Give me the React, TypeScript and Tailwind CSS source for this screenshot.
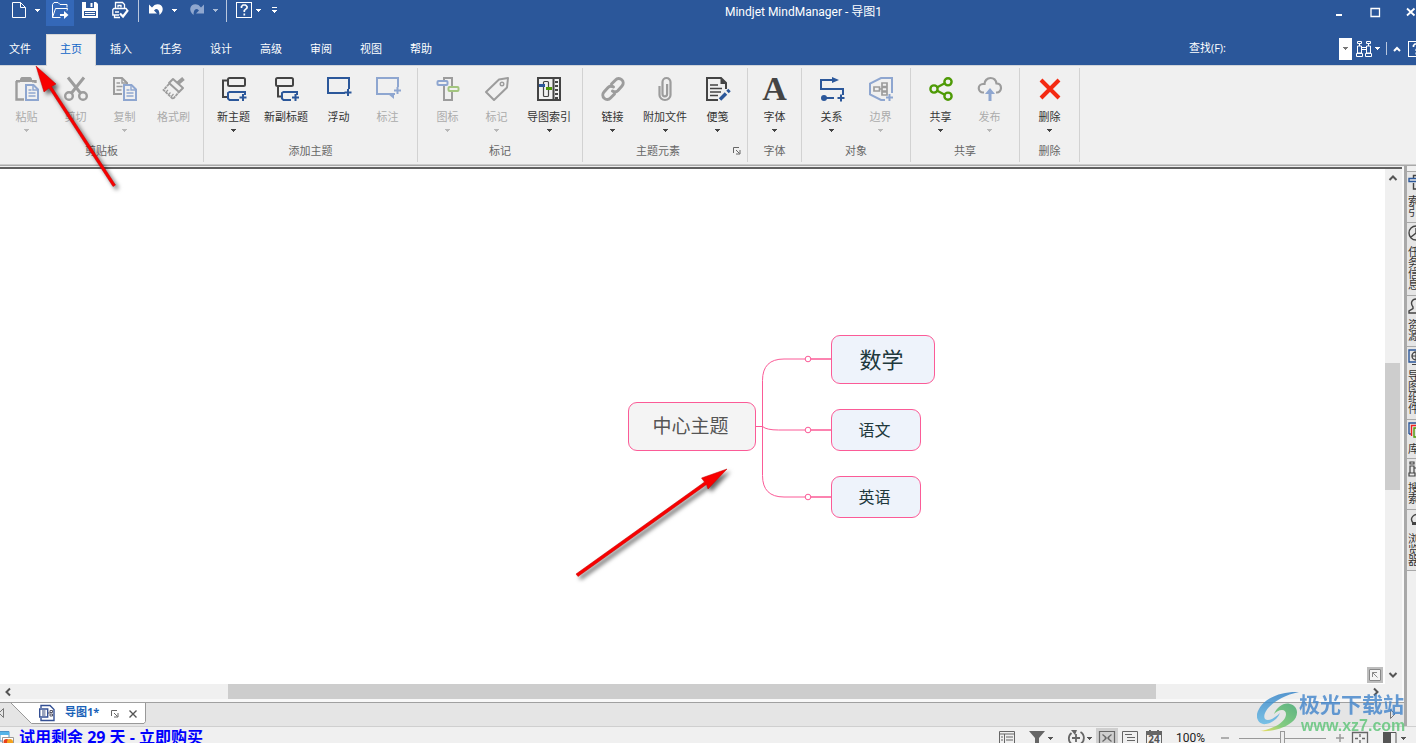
import React from "react";

type IconProps = { children: React.ReactNode; size?: string; box?: string };

function Icon({ children, size = "h-6 w-6", box = "0 0 24 24" }: IconProps) {
  return (
    <svg viewBox={box} className={`${size} shrink-0 overflow-visible`} fill="none" aria-hidden="true">
      {children}
    </svg>
  );
}

function Caret({ className = "text-[#444]" }: { className?: string }) {
  return (
    <svg viewBox="0 0 5 3" className={`h-[3px] w-[5px] shrink-0 ${className}`} aria-hidden="true">
      <path d="M0 0h5v1H4v1H3v1H2V2H1V1H0z" fill="currentColor" />
    </svg>
  );
}

const GRAY = "#9c9c9c";
const SOFT = "#8ea6d0";
const DARK = "#444444";
const BLUE = "#2b579a";

const icons: Record<string, React.ReactNode> = {
  paste: (
    <Icon>
      <path d="M1.5 4v18.5H9M1 4.2h4M17 4.2h3.5V6" stroke={GRAY} strokeWidth="2.4" />
      <path d="M5 1.5 6.5 0h9L17 1.500V5H5z" fill={GRAY} />
      <path d="M11 8h7.500l4.500 4.500V23H11z" stroke={SOFT} strokeWidth="2" />
      <path d="M18 8v5h5" stroke={SOFT} strokeWidth="1.500" />
      <path d="M13.500 13h3M13.500 16h7M13.500 19h7" stroke={SOFT} strokeWidth="1.400" />
    </Icon>
  ),
  cut: (
    <Icon>
      <path d="M4 0.500 16.500 16M20 0.500 7.500 16" stroke={GRAY} strokeWidth="3" />
      <circle cx="5" cy="19" r="3.800" stroke={GRAY} strokeWidth="2.400" />
      <circle cx="19" cy="19" r="3.800" stroke={GRAY} strokeWidth="2.400" />
    </Icon>
  ),
  copy: (
    <Icon>
      <path d="M9 17H1V1h8l5 5v1" stroke={GRAY} strokeWidth="2" />
      <path d="M9 1v5h5M3.500 6H7M3.500 9.500h6M3.500 13h5" stroke={GRAY} strokeWidth="1.400" />
      <path d="M11 8h7.500l4.500 4.500V23H11z" stroke={SOFT} strokeWidth="2" />
      <path d="M18 8v5h5M13.500 13h3M13.500 16h7M13.500 19h7" stroke={SOFT} strokeWidth="1.400" />
    </Icon>
  ),
  painter: (
    <Icon>
      <path d="m7 6 4-4 10 9-4 4z" stroke={GRAY} strokeWidth="2" strokeLinejoin="round" />
      <path d="m15.500 6.500 6-5" stroke={GRAY} strokeWidth="4" />
      <path d="M7 7 1.500 13 11 22l6-7" stroke={GRAY} strokeWidth="1.800" strokeDasharray="3 0.600" />
      <path d="m4 15 2-2M6.500 17.500l2-2M9 20l2.500-3" stroke={GRAY} strokeWidth="1.200" />
    </Icon>
  ),
  topic: (
    <Icon>
      <path d="M6 3.500H1V20h4" stroke={DARK} strokeWidth="2" />
      <rect x="6" y="1" width="17" height="8" rx="1.500" stroke={DARK} strokeWidth="2" />
      <path d="M23 18v-3H7.500L6 16v5.500L7.500 23H17M21 17v7M17.500 20.500h7" stroke={BLUE} strokeWidth="2" />
    </Icon>
  ),
  subtopic: (
    <Icon>
      <path d="M4 9v10.500h4" stroke={DARK} strokeWidth="2" />
      <rect x="2" y="1" width="17" height="8" rx="1.500" stroke={DARK} strokeWidth="2" />
      <path d="M23 18v-3H9.500L8 16v5.500L9.500 23H17M21.500 17v7M18 20.500h7" stroke={BLUE} strokeWidth="2" />
    </Icon>
  ),
  floating: (
    <Icon>
      <path d="M18 16H1V1h21v11M21 12v7M17.500 15.500h7" stroke={BLUE} strokeWidth="2" />
    </Icon>
  ),
  callout: (
    <Icon>
      <path d="M19 17H1V1h21v9M21.500 10v7M18 13.500h7" stroke={SOFT} strokeWidth="2" />
      <path d="M12 17h6v5z" fill={SOFT} />
    </Icon>
  ),
  markers: (
    <Icon>
      <path d="M8 4V1h8v8M8 8v15h8v-8" stroke={GRAY} strokeWidth="2" />
      <rect x="1.500" y="4" width="10" height="4" rx="1" stroke={SOFT} strokeWidth="2" />
      <rect x="12.500" y="10" width="10" height="4" rx="1" stroke="#a3c57f" strokeWidth="2" />
    </Icon>
  ),
  tag: (
    <Icon>
      <path d="M1 15 14 2.500 23 1l-1 9.500L9 23z" stroke={GRAY} strokeWidth="2" strokeLinejoin="round" />
      <circle cx="17" cy="7" r="1.800" stroke={GRAY} strokeWidth="1.400" />
    </Icon>
  ),
  index: (
    <Icon>
      <path d="M1 1h22v22H1zM16.500 1v22" stroke={DARK} strokeWidth="2" />
      <path d="M19.500 4v18" stroke={DARK} strokeWidth="3" strokeDasharray="2 2" />
      <rect x="6.500" y="4.500" width="5" height="15" rx="1" stroke={DARK} strokeWidth="1.200" />
      <path d="M2 8.500h6" stroke={BLUE} strokeWidth="3" />
      <path d="M9 11.500h6" stroke="#4e9a06" strokeWidth="3" />
    </Icon>
  ),
  link: (
    <Icon>
      <g stroke={GRAY} strokeWidth="3" strokeLinecap="round">
        <path d="m10.500 7 4-4a4.400 4.400 0 0 1 6.500 6l-4 4.500a4.400 4.400 0 0 1-5.500.500" />
        <path d="m13.500 17-4 4a4.400 4.400 0 0 1-6.500-6l4-4.500a4.400 4.400 0 0 1 5.500-.500" />
      </g>
    </Icon>
  ),
  clip: (
    <Icon>
      <path
        d="M6.500 9v9a5.500 5 0 0 0 11 0V5a4 4 0 0 0-8 0v12a2.300 2.300 0 0 0 4.600 0V7"
        stroke={GRAY}
        strokeWidth="2.200"
      />
    </Icon>
  ),
  note: (
    <Icon>
      <path d="M12 23H1V1h14l5 5v6" stroke={DARK} strokeWidth="2" />
      <path d="M14.500 1v6H20z" fill={DARK} />
      <path d="M4 8h8M4 11.500h12M4 15h11M4 18.500h8" stroke={DARK} strokeWidth="1.400" />
      <path d="m14 22.500 6-6M21.500 15l2-2" stroke={BLUE} strokeWidth="3.500" />
    </Icon>
  ),
  font: (
    <span className="flex h-6 w-6 items-center justify-center font-['Liberation_Serif',serif] text-[34px] leading-6 font-bold text-[#444]">
      A
    </span>
  ),
  relation: (
    <Icon>
      <path d="M13 3H1v9h22v6M6 21h8M21 17.500v7M17.500 21h7" stroke={BLUE} strokeWidth="2" />
      <path d="m12 0 7 3-7 3z" fill={BLUE} />
      <circle cx="4" cy="21" r="3" fill={BLUE} />
    </Icon>
  ),
  boundary: (
    <Icon>
      <path d="M23 16V1H12L1 6.500v11L12 23h4M20.500 17v7M17 20.500h7" stroke={SOFT} strokeWidth="2" />
      <path d="M5 10h5.500v4H5zM13 6h5v3.500h-5zM13 10.500h5V14h-5zM13 15h5v3h-5zM10.500 12H13" stroke={GRAY} strokeWidth="1.700" />
    </Icon>
  ),
  share: (
    <Icon>
      <path d="m5 12 14-7.500M5 12l14 7.500" stroke="#4e9a06" strokeWidth="2.200" />
      <circle cx="5" cy="12" r="3.600" fill="#f0f0f0" stroke="#4e9a06" strokeWidth="2.400" />
      <circle cx="19" cy="4.800" r="3.600" fill="#f0f0f0" stroke="#4e9a06" strokeWidth="2.400" />
      <circle cx="19" cy="19.200" r="3.600" fill="#f0f0f0" stroke="#4e9a06" strokeWidth="2.400" />
    </Icon>
  ),
  publish: (
    <Icon>
      <path
        d="M6 15.500H5A4.200 4.200 0 0 1 5 7h1.500C6.500 4 9 1 12.500 1S18 3.500 18.500 6.500C21.500 6.500 23 8.500 23 11s-2 4.500-4 4.500h-1"
        stroke={GRAY}
        strokeWidth="2.200"
      />
      <path d="M10.500 24v-7H7l5-6 5 6h-3.500v7z" fill={SOFT} />
    </Icon>
  ),
  remove: (
    <Icon>
      <path d="m3 3 18 18M21 3 3 21" stroke="#f42a12" strokeWidth="4" />
    </Icon>
  ),
};

type Tool = { icon: string; label: string; off?: boolean; menu?: boolean; wide?: boolean };
type Group = { title: string; tools: Tool[]; pad?: string; launcher?: boolean };

const groups: Group[] = [
  {
    title: "剪贴板",
    pad: "pl-0.5 pr-[5px]",
    tools: [
      { icon: "paste", label: "粘贴", off: true, menu: true },
      { icon: "cut", label: "剪切", off: true },
      { icon: "copy", label: "复制", off: true, menu: true },
      { icon: "painter", label: "格式刷", off: true },
    ],
  },
  {
    title: "添加主题",
    tools: [
      { icon: "topic", label: "新主题", menu: true },
      { icon: "subtopic", label: "新副标题", wide: true },
      { icon: "floating", label: "浮动" },
      { icon: "callout", label: "标注", off: true },
    ],
  },
  {
    title: "标记",
    tools: [
      { icon: "markers", label: "图标", off: true, menu: true },
      { icon: "tag", label: "标记", off: true, menu: true },
      { icon: "index", label: "导图索引", menu: true, wide: true },
    ],
  },
  {
    title: "主题元素",
    launcher: true,
    tools: [
      { icon: "link", label: "链接", menu: true },
      { icon: "clip", label: "附加文件", menu: true, wide: true },
      { icon: "note", label: "便笺", menu: true },
    ],
  },
  { title: "字体", pad: "px-0.5", tools: [{ icon: "font", label: "字体", menu: true }] },
  {
    title: "对象",
    tools: [
      { icon: "relation", label: "关系", menu: true },
      { icon: "boundary", label: "边界", off: true, menu: true },
    ],
  },
  {
    title: "共享",
    tools: [
      { icon: "share", label: "共享", menu: true },
      { icon: "publish", label: "发布", off: true, menu: true },
    ],
  },
  { title: "删除", tools: [{ icon: "remove", label: "删除", menu: true }] },
];

function LauncherIcon() {
  return (
    <Icon size="h-2 w-2" box="0 0 8 8">
      <path d="M.500 6V.500H6M3 3l3.500 3.500M7 3v4H3" stroke="#666" />
    </Icon>
  );
}

function RibbonGroup({ title, tools, pad = "px-[5px]", launcher }: Group) {
  return (
    <section className="my-0.5 flex shrink-0 flex-col border-r border-[#d2d2d2]">
      <div className={`flex h-[75px] ${pad}`}>
        {tools.map((t) => (
          <button
            key={t.label}
            disabled={t.off}
            className={`flex flex-col items-center pt-[9px] text-[11px] leading-4 whitespace-nowrap ${t.wide ? "w-14" : "w-[49px]"} ${t.off ? "text-[#ababab]" : "text-[#333]"}`}
          >
            {icons[t.icon]}
            <span className="mt-2 mb-1">{t.label}</span>
            {t.menu && <Caret className={t.off ? "text-[#b8b8b8]" : "text-[#444]"} />}
          </button>
        ))}
      </div>
      <div className="flex items-start justify-center text-[11px] leading-4 text-[#666]">
        <span className={launcher ? "flex-1 text-center" : ""}>{title}</span>
        {launcher && (
          <button aria-label={`${title}选项`} className="mt-1 mr-1.5">
            <LauncherIcon />
          </button>
        )}
      </div>
    </section>
  );
}

const quick = "flex h-[26px] shrink-0 items-center justify-center pb-1.5 text-white";

function HelpIcon() {
  return (
    <Icon size="h-4 w-4" box="0 0 16 16">
      <rect x=".500" y=".500" width="15" height="15" stroke="#fff" />
      <path d="M5.500 6V4.500L7 3h2.500L11 4.500V6L8.300 8.500V10M8.300 11.500v2" stroke="#fff" strokeWidth="1.700" />
    </Icon>
  );
}

function TitleBar() {
  return (
    <div className="flex h-[34px] items-start overflow-hidden pl-[5px] text-white">
      <button aria-label="新建" className={`${quick} w-7`}>
        <Icon size="h-4 w-4" box="0 0 16 16">
          <path d="M1.500.500h8l5 5v10h-13zM9.500.500v5h5" stroke="#fff" />
        </Icon>
      </button>
      <button aria-label="新建选项" className={`${quick} w-[9px]`}><Caret className="text-white" /></button>
      <button aria-label="打开" className={`${quick} ml-1 w-7 bg-[#3468b8]`}>
        <Icon size="h-4 w-4" box="0 0 16 16">
          <path d="M8.500 15.500h-8V2.500L2 .500h4l2 2h7v3M.500 15.500l3-9h12l-.500 2" stroke="#fff" />
          <path d="M8 12h4V9l4.500 4-4.500 4v-3H8z" fill="#fff" />
        </Icon>
      </button>
      <button aria-label="保存" className={`${quick} w-8`}>
        <Icon size="h-4 w-4" box="0 0 16 16">
          <path d="M0 0h14l2 2v14H0z" fill="#fff" />
          <path d="M4 0h8v6H4zM2 9h12v5H2z" fill={BLUE} />
          <path d="M8.500 1h2v4h-2zM3 10h10v1H3zM3 12h10v1H3z" fill="#fff" />
        </Icon>
      </button>
      <button aria-label="打印预览" className={`${quick} w-7`}>
        <Icon size="h-4 w-4" box="0 0 16 16">
          <path d="M3.500 7V.500h7l2 2V7M8 15.500H2.500v-2M7 13H.800V7.500L2 6.500h12l1.200 1.500" stroke="#fff" strokeWidth="1.300" />
          <path d="M6 5.500v-2h3v2M3 10h4" stroke="#fff" strokeWidth="1.300" />
          <path d="m8 11.500 3 3L16 8" stroke="#fff" strokeWidth="2.200" />
        </Icon>
      </button>
      <span className="mx-1 h-[22px] w-px shrink-0 bg-[#b9c7de]" />
      <button aria-label="撤消" className={`${quick} w-[26px]`}>
        <Icon size="h-4 w-4" box="0 0 16 16">
          <path d="M1 2.500v9h8L6 8.500c3-3 5.500-1 5.500 4.500C18 8 14 0 6.500 3L4 5.500z" fill="#fff" />
        </Icon>
      </button>
      <button aria-label="撤消选项" className={`${quick} w-2.5`}><Caret className="text-white" /></button>
      <button aria-label="恢复" className={`${quick} ml-1 w-7`}>
        <Icon size="h-4 w-4" box="0 0 16 16">
          <path d="M15 2.500v9H7l3-3C7 5.500 4.500 7.500 4.500 13-2 8 2 0 9.500 3L12 5.500z" fill="#8fa7cf" />
        </Icon>
      </button>
      <button aria-label="恢复选项" className={`${quick} w-2`}><Caret className="text-[#a9bbd8]" /></button>
      <span className="mr-1.5 ml-[7px] h-[22px] w-px shrink-0 bg-[#b9c7de]" />
      <button aria-label="帮助" className={`${quick} w-[22px]`}><HelpIcon /></button>
      <button aria-label="帮助选项" className={`${quick} w-[7px]`}><Caret className="text-white" /></button>
      <button aria-label="自定义快速访问工具栏" className={`${quick} w-6`}>
        <Icon size="h-1.5 w-[5px]" box="0 0 5 6">
          <path d="M0 0h5v1H0zM0 3h5v1H4v1H3v1H2V5H1V4H0z" fill="#fff" />
        </Icon>
      </button>
      <h1 className="min-w-0 flex-1 truncate text-center font-['Roboto','Noto_Sans_CJK_SC',sans-serif] text-[12px] leading-6">Mindjet MindManager - 导图1</h1>
      <button aria-label="最小化" className="flex h-6 w-9 shrink-0 items-center justify-center">
        <Icon size="h-2.5 w-2.5" box="0 0 10 10"><path d="M2 8h6" stroke="#fff" strokeWidth="2" /></Icon>
      </button>
      <button aria-label="最大化" className="flex h-6 w-9 shrink-0 items-center justify-center">
        <Icon size="h-2.5 w-2.5" box="0 0 10 10"><path d="M1 1.500h8.500V9.500H1z" stroke="#fff" strokeWidth="1.300" /></Icon>
      </button>
      <button aria-label="关闭" className="flex h-6 w-[23px] shrink-0 items-center justify-end">
        <Icon size="h-2.5 w-2.5" box="0 0 10 10"><path d="m1 1.500 7.500 7M8.500 1.500 1 8.500" stroke="#fff" strokeWidth="1.800" /></Icon>
      </button>
    </div>
  );
}

const tabs = ["插入", "任务", "设计", "高级", "审阅", "视图", "帮助"];

function TabBar() {
  return (
    <div className="flex h-8 items-stretch overflow-hidden text-[11px] text-white">
      <nav className="flex shrink-0">
        <button className="w-[46px] border-b border-[#d0d4da] pr-1.5">文件</button>
        <button className="w-[50px] border border-b-0 border-[#d6d6d6] bg-[#f0f0f0] pb-0.5 text-[#0f66c8]">主页</button>
        {tabs.map((t) => (
          <button key={t} className="w-[50px] border-b border-[#d0d4da]">{t}</button>
        ))}
      </nav>
      <div className="flex min-w-0 flex-1 items-center justify-end border-b border-[#d0d4da] pb-0.5">
        <label htmlFor="find" className="shrink-0 whitespace-nowrap">查找(F):</label>
        <input id="find" className="h-[22px] w-[113px] min-w-0 bg-transparent px-1 outline-none" />
        <button aria-label="查找历史" className="flex h-[22px] w-[13px] shrink-0 items-center justify-center bg-white">
          <Caret className="text-[#777]" />
        </button>
        <button aria-label="查找" className="ml-1 shrink-0">
          <Icon size="h-4 w-4" box="0 0 16 16">
            <path d="M1.500.500h4v2h-4zM10.500.500h4v2h-4zM1.500 5h4v7h-4zM10.500 5h4v7h-4zM5.500 6.500h5v2h-5zM.500 12.500h6v3h-6zM9.500 12.500h6v3h-6zM3.500 2.500V5M12.500 2.500V5" stroke="#fff" />
          </Icon>
        </button>
        <button aria-label="查找选项" className="flex h-4 w-2.5 shrink-0 items-center justify-center"><Caret className="text-white" /></button>
        <span className="ml-1 h-[13px] w-px shrink-0 bg-[#b9c7de]" />
        <button aria-label="折叠功能区" className="ml-1.5 shrink-0">
          <Icon size="h-2 w-2" box="0 0 8 8"><path d="M1 6 4 3l3 3" stroke="#fff" strokeWidth="2" /></Icon>
        </button>
        <div className="ml-[7px] w-2 shrink-0 overflow-hidden">
          <button aria-label="帮助主题" className="block w-4"><HelpIcon /></button>
        </div>
      </div>
    </div>
  );
}

const PINK = "#fb5b97";

function MindMap() {
  const node = "absolute flex items-center justify-center rounded-[9px] border border-[#fb5b97] pr-[3px] pb-px";
  return (
    <div className="relative min-w-0 flex-1 overflow-hidden bg-white">
      <svg className="absolute top-0 left-0 h-full w-full" fill="none" stroke={PINK} aria-hidden="true">
        <path d="M756 257.500h6.500M808 190h-24q-21.500 0-21.500 21.500v95q0 21.500 21.500 21.500H808" />
        <path d="M762.500 257.500q4 3.500 16 3.500H808" />
        <path d="M811 190h20M811 261h20M811 328h20" strokeWidth="1.500" />
        <circle cx="808" cy="190" r="2.800" fill="#fff" />
        <circle cx="808" cy="261" r="2.800" fill="#fff" />
        <circle cx="808" cy="328" r="2.800" fill="#fff" />
      </svg>
      <div className={`${node} top-[233px] left-[628px] h-[49px] w-32 bg-[#f4f4f4] text-[19px] text-[#555]`}>中心主题</div>
      <div className={`${node} top-[166px] left-[831px] h-[49px] w-[104px] bg-[#eef3fb] text-[22px] text-[#20383c]`}>数学</div>
      <div className={`${node} top-[240px] left-[831px] h-[42px] w-[90px] bg-[#eef3fb] text-[16px] text-[#20383c]`}>语文</div>
      <div className={`${node} top-[307px] left-[831px] h-[42px] w-[90px] bg-[#eef3fb] text-[16px] text-[#20383c]`}>英语</div>
      <button aria-label="导航" className="absolute right-0.5 bottom-px flex h-4 w-4 items-center justify-center border-2 border-[#bdbdbd] bg-[#f4f4f4]">
        <Icon size="h-3 w-3" box="0 0 12 12"><path d="M.500.500h11v11H.500zM3.500 8V3.500H8M3.500 3.500l5 5" stroke="#888" /></Icon>
      </button>
    </div>
  );
}

function Chevron({ d }: { d: string }) {
  return <Icon size="h-2 w-2" box="0 0 8 8"><path d={d} stroke="#555" strokeWidth="2" /></Icon>;
}

const panels: { label: string; art: React.ReactNode; h: string }[] = [
  { label: "索引", h: "h-[51px]", art: <><path d="M5.500 4V1.500h7V15h-7V9" stroke={DARK} strokeWidth="1.400" /><path d="M1 4.500h8v3H1z" stroke={BLUE} strokeWidth="1.400" /></> },
  { label: "任务信息", h: "h-[73px]", art: <><circle cx="8" cy="8" r="7" stroke={DARK} strokeWidth="1.400" /><path d="M8 3v5l-5 4" stroke={DARK} strokeWidth="1.400" /></> },
  { label: "资源", h: "h-[51px]", art: <path d="M1 15v-2l4-2.500V9C2 5 4 1 8 1s6 4 3 8v1.500l4 2.500v2z" stroke={DARK} strokeWidth="1.400" /> },
  { label: "导图组件", h: "h-[73px]", art: <><path d="M1 1h14v12H1z" stroke={BLUE} strokeWidth="1.400" /><circle cx="8" cy="7" r="4" stroke={DARK} strokeWidth="1.400" /><path d="M4 7h8M8 3v8M4 15.500h8" stroke={DARK} strokeWidth="1.200" /></> },
  { label: "库", h: "h-[39px]", art: <><path d="M1 12V1h10v2M1 12h2" stroke={BLUE} strokeWidth="1.400" /><path d="M3.500 14V3.500h10V5" stroke="#e22" strokeWidth="1.400" /><path d="M6 6h9v9H6z" stroke="#4e9a06" strokeWidth="1.400" /></> },
  { label: "搜索", h: "h-[51px]", art: <path d="M2 1h4v2H2zM2 5h4v7H2zM6 7h6M1 12h6v3H1z" stroke={DARK} strokeWidth="1.200" /> },
  { label: "浏览器", h: "h-[62px]", art: <><path d="M5 11C1 6 6 1 12 3" stroke={DARK} strokeWidth="1.400" /><path d="M4 10h5v3H4z" fill={DARK} /></> },
];

function SidePanels() {
  return (
    <aside className="w-3 shrink-0 overflow-hidden border-t border-l-3 border-[#a9a9a9] bg-[#f0f0f0] pt-[5px]">
      {panels.map((p) => (
        <button
          key={p.label}
          className={`flex w-5 flex-col items-start border-t border-[#a9a9a9] bg-[#e6e6e6] pt-0.5 pl-px text-[11px] leading-[11px] text-[#333] last:border-b ${p.h}`}
        >
          <Icon size="h-4 w-4" box="0 0 16 16">{p.art}</Icon>
          <span className="mt-[5px] w-[11px] text-left break-all">{p.label}</span>
        </button>
      ))}
    </aside>
  );
}

function DocumentTabs() {
  return (
    <div className="flex h-6 shrink-0 overflow-hidden border-t border-[#a0a0a0] bg-[#e5e5e5]">
      <div className="relative flex h-[21px] w-[146px] items-center">
        <svg viewBox="0 0 146 21" className="absolute inset-0 h-full w-full" aria-hidden="true">
          <path d="M11 0 31.500 20.500H144l1.500-2V0" fill="#fff" stroke="#999" />
          <path d="M3.500 5.500v9L-1 10z" fill="none" stroke="#777" />
        </svg>
        <button className="relative ml-[39px] flex items-center gap-2.5 pb-0.5 text-[11px] font-bold text-[#1a62b8]">
          <Icon size="h-4 w-4" box="0 0 16 16">
            <path d="M2 3V.500h9l4 4v11H2V13" stroke="#334f94" strokeWidth="1.400" />
            <path d="M.700 4h8v8h-8z" fill="#fff" stroke="#334f94" strokeWidth="1.400" />
            <path d="M3 5h3.500v6H3z" fill="#99a3bd" />
            <path d="M9 8h2M11 5.500h2.500v2H11zM11 9h2.500v2H11z" stroke="#556" />
          </Icon>
          导图1*
        </button>
        <button aria-label="还原导图窗口" className="relative ml-3"><LauncherIcon /></button>
        <button aria-label="关闭导图" className="relative ml-2.5">
          <Icon size="h-2 w-2" box="0 0 8 8"><path d="m.500.500 7 7M7.500.500l-7 7" stroke="#555" strokeWidth="1.400" /></Icon>
        </button>
      </div>
      <button aria-label="下一个导图" className="ml-auto h-[21px] pr-[9px]">
        <Icon size="h-2.5 w-[5px]" box="0 0 5 10"><path d="M.500.500v9L5 5z" stroke="#777" /></Icon>
      </button>
    </div>
  );
}

function StatusIcon({ children, label, className = "" }: { children: React.ReactNode; label: string; className?: string }) {
  return (
    <button aria-label={label} className={`flex h-5 shrink-0 items-center justify-center ${className}`}>
      <Icon size="h-4 w-4" box="0 0 16 16">{children}</Icon>
    </button>
  );
}

function StatusBar() {
  return (
    <footer className="flex h-[17px] shrink-0 items-start overflow-hidden border-t border-[#cfcfcf] bg-[#f0f0f0]">
      <Icon size="mt-1 h-4 w-[14px]" box="0 0 14 16">
        <path d="M0 .500h9V10H0z" fill="#fff" stroke="#4b93c8" />
        <path d="M0 1h9v3H0z" fill="#55b4e8" />
        <path d="M2.500 6.500h11V15h-11z" fill="#fff" stroke="#999" />
        <circle cx="6.500" cy="11" r="3" fill="#e8401c" />
        <circle cx="10" cy="11" r="3" fill="#f4a21c" />
      </Icon>
      <a href="#buy" className="ml-[5px] text-[16px] leading-5 font-bold whitespace-nowrap text-[#0000fe]">
        试用剩余 29 天 - 立即购买
      </a>
      <div className="ml-auto flex h-[22px] shrink-0 items-center">
        <StatusIcon label="导图属性">
          <path d="M.500 1.500h15v13H.500zM5.500 4v10M.500 4h15M2 7h2M2 10h2M7 7h7M7 10h7" stroke="#666" />
        </StatusIcon>
        <StatusIcon label="筛选" className="ml-3.5"><path d="M0 1h16l-6 7v8l-4-2V8z" fill="#666" /></StatusIcon>
        <button aria-label="筛选选项" className="ml-[3px]"><Caret className="text-[#555]" /></button>
        <StatusIcon label="展开级别" className="ml-[15px]">
          <path d="M3.500 3a7 7 0 0 0 0 11M12.500 2a7 7 0 0 1 0 12M8 4v8M4 8h8" stroke="#666" strokeWidth="1.800" />
          <path d="M3 0h6L7 5z" fill="#666" />
        </StatusIcon>
        <button aria-label="展开选项" className="ml-[3px]"><Caret className="text-[#555]" /></button>
        <StatusIcon label="导图视图" className="ml-1 w-[22px] bg-[#cfcfcf]">
          <path d="M.500 1.500h15v13H.500zM3.500 4.500 7 7.500M12.500 4.500 9 7.500M3.500 11.500 7 8.500M12.500 11.500 9 8.500M5.500 8h5" stroke="#666" strokeWidth="1.200" />
        </StatusIcon>
        <StatusIcon label="大纲视图" className="ml-1"><path d="M.500 1.500h15v13H.500zM3 4.500h7M5 7.500h8M5 10.500h8" stroke="#666" /></StatusIcon>
        <StatusIcon label="日程视图" className="ml-2">
          <path d="M.500 2.500h15v12H.500z" stroke="#666" />
          <path d="M0 1h16v4H0zM3 0h2v3H3zM11 0h2v3h-2z" fill="#666" />
          <text x="8" y="13" textAnchor="middle" fontSize="10" fontWeight="700" fill="#555">24</text>
        </StatusIcon>
        <label htmlFor="zoom" className="ml-3.5 w-[37px] font-['Roboto',sans-serif] text-[12px] text-[#222]">100%</label>
        <button aria-label="缩小" className="ml-2">
          <Icon size="h-2 w-2" box="0 0 8 8"><path d="M0 4h8" stroke="#999" strokeWidth="1.500" /></Icon>
        </button>
        <input
          id="zoom"
          type="range"
          defaultValue={50}
          className="mx-2.5 h-4 w-[87px] appearance-none bg-[linear-gradient(#999,#999)] bg-[length:100%_1px] bg-center bg-no-repeat [&::-webkit-slider-thumb]:h-3.5 [&::-webkit-slider-thumb]:w-[5px] [&::-webkit-slider-thumb]:appearance-none [&::-webkit-slider-thumb]:border [&::-webkit-slider-thumb]:border-[#999] [&::-webkit-slider-thumb]:bg-[#eee]"
        />
        <button aria-label="放大">
          <Icon size="h-2 w-2" box="0 0 8 8"><path d="M0 4h8M4 0v8" stroke="#999" strokeWidth="1.500" /></Icon>
        </button>
        <StatusIcon label="适合窗口" className="ml-2">
          <path d="M.500 2.500h15v12H.500zM8 4v3M8 10v3M3 8.500h3M10 8.500h3" stroke="#666" strokeWidth="1.300" />
        </StatusIcon>
        <StatusIcon label="任务窗格" className="ml-3.5"><path d="M1 2h8v13H1z" fill="#555" /><path d="M9 2.500h5V15" stroke="#555" /></StatusIcon>
        <button aria-label="任务窗格选项" className="mr-2.5 ml-[3px]"><Caret className="text-[#555]" /></button>
      </div>
    </footer>
  );
}

function Watermark() {
  return (
    <div className="pointer-events-none absolute right-[10px] bottom-[6px] flex items-center opacity-80">
      <svg viewBox="0 0 42 42" className="mb-1 h-[42px] w-[42px]" aria-hidden="true">
        <defs>
          <linearGradient id="swoosh" x1="0" y1="0" x2="0" y2="1">
            <stop offset="0" stopColor="#2f7fc6" />
            <stop offset="1" stopColor="#5db8e6" />
          </linearGradient>
          <linearGradient id="leaf" x1="1" y1="0" x2="0" y2="1">
            <stop offset="0" stopColor="#3aa56a" />
            <stop offset="0.600" stopColor="#6cc76a" />
            <stop offset="1" stopColor="#f0dc3c" />
          </linearGradient>
        </defs>
        <path d="M42 1C20 0 3 10 0 23c-1 6 3 11 9 10 7-1 12-6 14-11-5 5-12 9-15 6C4 22 17 6 42 1z" fill="url(#swoosh)" />
        <path d="M17 23c3-7 10-12 16-10 9 2 9 13 2 18C28 37 15 41 3 40c11-2 21-6 25-13 2-4 1-8-3-8-3 0-6 2-8 4z" fill="url(#leaf)" />
      </svg>
      <div className="w-[107px] whitespace-nowrap">
        <div className="text-[21px] leading-6 font-bold text-[#4184cb]">极光下载站</div>
        <div className="pl-0.5 font-['Liberation_Sans',sans-serif] text-[16px] leading-5 font-bold text-[#5cc476]">www.xz7.com</div>
      </div>
    </div>
  );
}

function PointerArrows() {
  return (
    <svg className="pointer-events-none absolute inset-0 h-full w-full drop-shadow-[3px_3px_2px_rgba(0,0,0,0.6)]" aria-hidden="true">
      <g fill="#f80000" stroke="#c00000" strokeWidth="0.500">
        <path d="M36 66 56 84l-4.500 2.500L115.500 185l-2.500 1.500L49 88l-5 4z" />
        <path d="m727 469-19 20-1.500-4.500L578 576.500l-2-2.500 128.500-92-3-4z" />
      </g>
    </svg>
  );
}

export default function App() {
  return (
    <div className="relative flex h-screen flex-col overflow-hidden bg-[#f0f0f0] font-['Open_Sans','Noto_Sans_CJK_SC',sans-serif]">
      <header className="shrink-0 bg-[#2b579a]">
        <TitleBar />
        <TabBar />
      </header>
      <div className="flex h-[99px] shrink-0 overflow-hidden border-b border-[#cccccc]">
        {groups.map((g) => <RibbonGroup key={g.title} {...g} />)}
      </div>
      <div className="flex min-h-0 flex-1">
        <main className="flex min-w-0 flex-1 flex-col border-t border-[#a9a9a9] pt-px">
          <div className="flex min-h-0 flex-1 flex-col border-r-2 border-[#fafafa]">
            <div className="flex min-h-0 flex-1 border-t-2 border-[#606060]">
              <MindMap />
              <div className="flex w-[17px] shrink-0 flex-col pr-0.5">
                <button aria-label="向上滚动" className="flex h-[18px] items-center justify-center"><Chevron d="M.500 6 4 2.500 7.500 6" /></button>
                <div className="flex-[176]" />
                <div className="flex-[127] bg-[#cdcdcd]" />
                <div className="flex-[175]" />
                <button aria-label="向下滚动" className="flex h-[19px] items-center justify-center"><Chevron d="M.500 2 4 5.500 7.500 2" /></button>
              </div>
            </div>
            <div className="flex h-[15px] shrink-0 pr-[17px]">
              <button aria-label="向左滚动" className="flex w-4 items-center justify-center"><Chevron d="M6 .500 2.500 4 6 7.500" /></button>
              <div className="flex-[212]" />
              <div className="flex-[928] bg-[#cdcdcd]" />
              <div className="flex-[211]" />
              <button aria-label="向右滚动" className="flex w-[18px] items-center justify-center"><Chevron d="M2 .500 5.500 4 2 7.500" /></button>
            </div>
          </div>
          <div className="h-[3px] shrink-0 bg-[#f8f8f8]" />
          <DocumentTabs />
        </main>
        <SidePanels />
      </div>
      <StatusBar />
      <Watermark />
      <PointerArrows />
    </div>
  );
}
